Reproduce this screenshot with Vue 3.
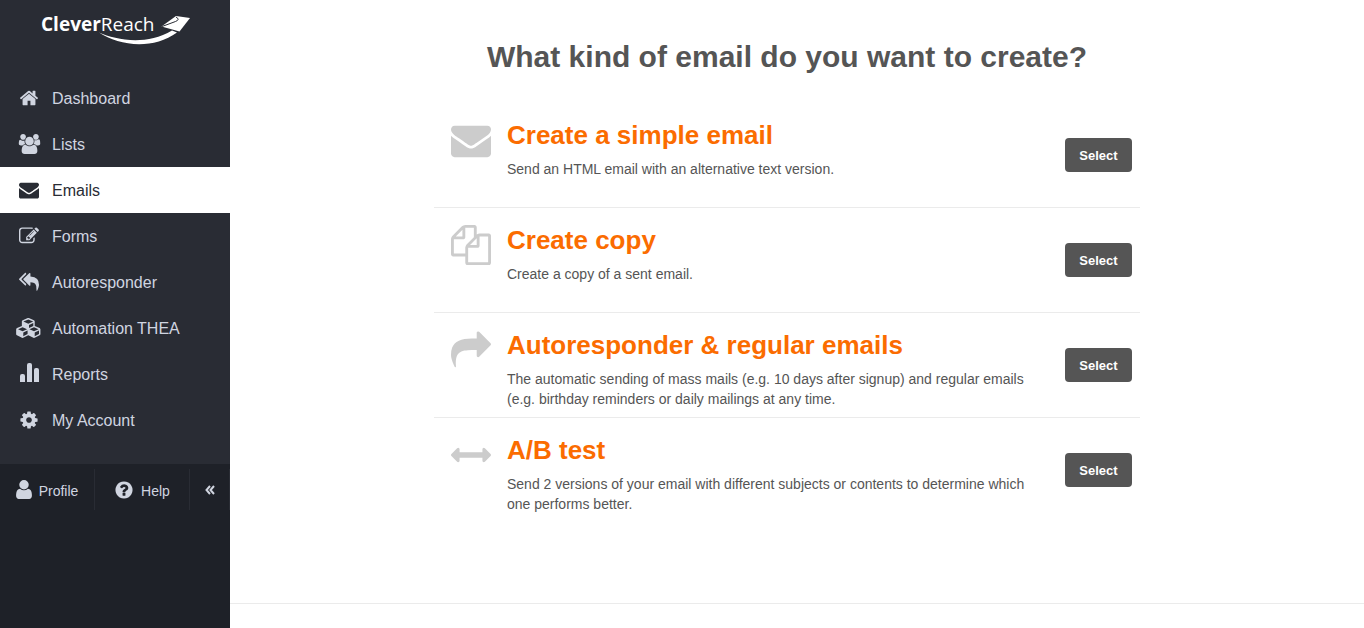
<template>
  <div class="app">
    <aside class="sidebar">
      <div class="sidebar-top">
        <a href="#" class="logo" aria-label="CleverReach">
          <svg width="160" height="42" viewBox="0 -8 160 42">
            <text x="0" y="19" class="logo-text"><tspan class="logo-bold">Clever</tspan>Reach</text>
            <path d="M58 20.500C75 28 105 34 131 18.500L136 20.500C112 38 78 34 58 20.500Z" />
            <path d="M135 4L149 6L138.500 19.500L120.500 14.500Z" />
            <path d="M121 14.500L134.500 9.500Q139.500 7.500 135 5" class="logo-fold" />
          </svg>
        </a>

        <nav class="nav">
          <a
            v-for="item in navItems"
            :key="item.label"
            href="#"
            class="nav-item"
            :class="{ active: item.label === current }"
            @click.prevent="current = item.label"
          >
            <span class="nav-icon">
              <svg :width="item.width" :height="item.height" :viewBox="item.box">
                <path :d="item.path" />
              </svg>
            </span>
            <span class="nav-label">{{ item.label }}</span>
          </a>
        </nav>
      </div>

      <div class="sidebar-bottom">
        <a href="#" class="bottom-item profile">
          <svg width="16" height="19" viewBox="256 128 1280 1536"><path :d="icons.user" /></svg>
          <span>Profile</span>
        </a>
        <a href="#" class="bottom-item help">
          <svg width="20" height="20" viewBox="0 0 1792 1792"><path :d="icons.question" /></svg>
          <span>Help</span>
        </a>
        <button type="button" class="bottom-item collapse" aria-label="Collapse">
          <svg width="10" height="10" viewBox="0 0 10 10">
            <path d="M5 1L1.500 5L5 9M9 1L5.500 5L9 9" class="chevrons" />
          </svg>
        </button>
      </div>
    </aside>

    <main class="main">
      <div class="page">
        <section class="content">
          <h1>What kind of email do you want to create?</h1>
          <ul class="options">
            <li v-for="option in options" :key="option.title" class="option">
              <svg class="option-icon" width="40" height="40" viewBox="0 0 1792 1792">
                <path :d="option.path" />
              </svg>
              <div class="option-text">
                <h2>{{ option.title }}</h2>
                <p>{{ option.text }}</p>
              </div>
              <button type="button" class="select-button">Select</button>
            </li>
          </ul>
        </section>
      </div>
      <footer class="footer"></footer>
    </main>
  </div>
</template>

<script setup>
import { ref } from "vue";

const current = ref("Emails");

const icons = {
  home: "M1472 992v480q0 26-19 45t-45 19h-384v-384h-256v384h-384q-26 0-45-19t-19-45v-480q0-1 .5-3t.5-3l575-474 575 474q1 2 1 6zm223-69l-62 74q-8 9-21 11h-3q-13 0-21-7l-692-577-692 577q-12 8-24 7-13-2-21-11l-62-74q-8-10-7-23.5t11-21.5l719-599q32-26 76-26t76 26l244 204v-195q0-14 9-23t23-9h192q14 0 23 9t9 23v408l219 182q10 8 11 21.5t-7 23.5z",
  users: "M657 896q-162 5-265 128h-134q-82 0-138-40.5t-56-118.5q0-353 124-353 6 0 43.5 21t97.5 42.5 119 21.5q67 0 133-23-5 37-5 66 0 159 81 293zm1071 637q0 120-73 189.5t-194 69.5h-874q-121 0-194-69.5t-73-189.5q0-53 3.5-103.5t14-109 26.5-108.5 43-97.5 62-81 85.5-53.5 111.5-20q10 0 43 21.5t73 48 107 48 135 21.5 135-21.5 107-48 73-48 43-21.5q61 0 111.5 20t85.5 53.5 62 81 43 97.5 26.5 108.5 14 109 3.5 103.5zm-1024-1277q0 106-75 181t-181 75-181-75-75-181 75-181 181-75 181 75 75 181zm704 384q0 159-112.5 271.5t-271.5 112.5-271.5-112.5-112.5-271.5 112.5-271.5 271.5-112.5 271.5 112.5 112.5 271.5zm576 225q0 78-56 118.5t-138 40.5h-134q-103-123-265-128 81-134 81-293 0-29-5-66 66 23 133 23 59 0 119-21.5t97.5-42.5 43.5-21q124 0 124 353zm-128-609q0 106-75 181t-181 75-181-75-75-181 75-181 181-75 181 75 75 181z",
  envelope: "M1792 710v794q0 66-47 113t-113 47h-1472q-66 0-113-47t-47-113v-794q44 49 101 87 362 246 497 345 57 42 92.5 65.5t94.5 48 110 24.5h2q51 0 110-24.5t94.5-48 92.5-65.5q170-123 498-345 57-39 100-87zm0-294q0 79-49 151t-122 123q-376 261-468 325-10 7-42.5 31t-54 38.5-52 32.5-57.5 27-50 9h-2q-23 0-50-9t-57.5-27-52-32.5-54-38.5-42.5-31q-91-64-262-182.5t-205-142.5q-62-42-117-115.5t-55-136.5q0-78 41.5-130t118.5-52h1472q65 0 112.5 47t47.5 113z",
  edit: "M888 1184l116-116-152-152-116 116v56h96v96h56zm440-720q-16-16-33 1l-350 350q-17 17-1 33t33-1l350-350q17-17 1-33zm80 594v190q0 119-84.5 203.5t-203.5 84.5h-832q-119 0-203.5-84.5t-84.5-203.5v-832q0-119 84.5-203.5t203.5-84.5h832q63 0 117 25 15 7 18 23 3 17-9 29l-49 49q-14 14-32 8-23-6-45-6h-832q-66 0-113 47t-47 113v832q0 66 47 113t113 47h832q66 0 113-47t47-113v-126q0-13 9-22l64-64q15-15 35-7t20 29zm-96-738l288 288-672 672h-288v-288zm444 132l-92 92-288-288 92-92q28-28 68-28t68 28l152 152q28 28 28 68t-28 68z",
  replyAll: "M640 1082v70q0 42-39 59-13 5-25 5-27 0-45-19l-512-512q-19-19-19-45t19-45l512-512q29-31 70-14 39 17 39 59v69l-397 398q-19 19-19 45t19 45zm1152 58q0 58-17 133.5t-38.5 138-48 125-40.5 90.5l-20 40q-8 17-28 17-6 0-9-1-25-8-23-34 43-400-106-565-64-71-170.5-110.5t-267.5-52.5v251q0 42-39 59-13 5-25 5-27 0-45-19l-512-512q-19-19-19-45t19-45l512-512q29-31 70-14 39 17 39 59v262q411 28 599 221 169 173 169 509z",
  cubes: "M640 1632l384-192v-314l-384 164v342zm-64-454l404-173-404-173-404 173zm1088 454l384-192v-314l-384 164v342zm-64-454l404-173-404-173-404 173zm-448-293l384-165v-266l-384 164v267zm-64-379l441-189-441-189-441 189zm1088 518v416q0 36-19 67t-52 47l-448 224q-25 14-57 14t-57-14l-448-224q-5-2-7-4-2 2-7 4l-448 224q-25 14-57 14t-57-14l-448-224q-33-16-52-47t-19-67v-416q0-38 21.5-70t56.5-48l434-186v-400q0-38 21.5-70t56.5-48l448-192q23-10 50-10t50 10l448 192q35 16 56.5 48t21.5 70v400l434 186q36 16 57 48t21 70z",
  bars: "M0 19v-6a2 2 0 0 1 2-2h1a2 2 0 0 1 2 2v6zM7 19V2a2 2 0 0 1 2-2h1a2 2 0 0 1 2 2v17zM14 19V7a2 2 0 0 1 2-2h1a2 2 0 0 1 2 2v12z",
  cog: "M1152 896q0-106-75-181t-181-75-181 75-75 181 75 181 181 75 181-75 75-181zm512-109v222q0 12-8 23t-20 13l-185 28q-19 54-39 91 35 50 107 138 10 12 10 25t-9 23q-27 37-99 108t-94 71q-12 0-26-9l-138-108q-44 23-91 38-16 136-29 186-7 28-36 28h-222q-14 0-24.5-8.5t-11.5-21.5l-28-184q-49-16-90-37l-141 107q-10 9-25 9-14 0-25-11-126-114-165-168-7-10-7-23 0-12 8-23 15-21 51-66.5t54-70.5q-27-50-41-99l-183-27q-13-2-21-12.5t-8-23.5v-222q0-12 8-23t19-13l186-28q14-46 39-92-40-57-107-138-10-12-10-24 0-10 9-23 26-36 98.5-107.5t94.5-71.5q13 0 26 10l138 107q44-23 91-38 16-136 29-186 7-28 36-28h222q14 0 24.5 8.5t11.5 21.5l28 184q49 16 90 37l142-107q9-9 24-9 13 0 25 10 129 119 165 170 7 8 7 22 0 12-8 23-15 21-51 66.5t-54 70.5q26 50 41 98l183 28q13 2 21 12.5t8 23.5z",
  user: "M1536 1399q0 109-62.5 187t-150.5 78h-854q-88 0-150.5-78t-62.5-187q0-85 8.5-160.5t31.5-152 58.5-131 94-89 134.5-34.5q131 128 313 128t313-128q76 0 134.5 34.5t94 89 58.5 131 31.5 152 8.5 160.5zm-256-887q0 159-112.5 271.5t-271.5 112.5-271.5-112.5-112.5-271.5 112.5-271.5 271.5-112.5 271.5 112.5 112.5 271.5z",
  question: "M1024 1376v-192q0-14-9-23t-23-9h-192q-14 0-23 9t-9 23v192q0 14 9 23t23 9h192q14 0 23-9t9-23zm256-672q0-88-55.5-163t-138.5-116-170-41q-243 0-371 213-15 24 8 42l132 100q7 6 19 6 16 0 25-12 53-68 86-92 34-24 86-24 48 0 85.5 26t37.5 59q0 38-20 61t-68 45q-63 28-115.5 86.5t-52.5 125.5v36q0 14 9 23t23 9h192q14 0 23-9t9-23q0-19 21.5-49.5t54.5-49.5q32-18 49-28.5t46-35 44.5-48 28-60.5 12.5-81zm384 192q0 209-103 385.5t-279.5 279.5-385.5 103-385.5-103-279.5-279.5-103-385.5 103-385.5 279.5-279.5 385.5-103 385.5 103 279.5 279.5 103 385.5z",
  copy: "M1696 384q40 0 68 28t28 68v1216q0 40-28 68t-68 28h-960q-40 0-68-28t-28-68v-288h-544q-40 0-68-28t-28-68v-672q0-40 20-88t48-76l408-408q28-28 76-48t88-20h416q40 0 68 28t28 68v328q68-40 128-40h416zm-544 213l-299 299h299v-299zm-640-384l-299 299h299v-299zm196 647l316-316v-416h-384v416q0 40-28 68t-68 28h-416v640h512v-256q0-40 20-88t48-76zm956 804v-1152h-384v416q0 40-28 68t-68 28h-416v640h896z",
  share: "M1792 640q0 26-19 45l-512 512q-19 19-45 19t-45-19-19-45v-256h-224q-98 0-175.5 6t-154 21.5-133 42.5-105.5 69.5-80 101-48.5 138.5-17.5 181q0 55 5 123 0 6 2.5 23.5t2.5 26.5q0 15-8.5 25t-23.5 10q-16 0-28-17-7-9-13-22t-13.5-30-10.5-24q-127-285-127-451 0-199 53-333 162-403 875-403h224v-256q0-26 19-45t45-19 45 19l512 512q19 19 19 45z",
  arrows: "M1792 896q0 26-19 45l-256 256q-19 19-45 19t-45-19-19-45v-128h-1024v128q0 26-19 45t-45 19-45-19l-256-256q-19-19-19-45t19-45l256-256q19-19 45-19t45 19 19 45v128h1024v-128q0-26 19-45t45-19 45 19l256 256q19 19 19 45z",
};

const square = "0 0 1792 1792";

const navItems = [
  { label: "Dashboard", path: icons.home, box: square, width: 20, height: 20 },
  { label: "Lists", path: icons.users, box: "0 0 2048 1792", width: 23, height: 20 },
  { label: "Emails", path: icons.envelope, box: square, width: 20, height: 20 },
  { label: "Forms", path: icons.edit, box: square, width: 20, height: 20 },
  { label: "Autoresponder", path: icons.replyAll, box: square, width: 20, height: 20 },
  { label: "Automation THEA", path: icons.cubes, box: "0 0 2304 1792", width: 26, height: 20 },
  { label: "Reports", path: icons.bars, box: "0 0 19 23", width: 19, height: 23 },
  { label: "My Account", path: icons.cog, box: square, width: 20, height: 20 },
];

const options = [
  {
    title: "Create a simple email",
    text: "Send an HTML email with an alternative text version.",
    path: icons.envelope,
  },
  {
    title: "Create copy",
    text: "Create a copy of a sent email.",
    path: icons.copy,
  },
  {
    title: "Autoresponder & regular emails",
    text: "The automatic sending of mass mails (e.g. 10 days after signup) and regular emails (e.g. birthday reminders or daily mailings at any time.",
    path: icons.share,
  },
  {
    title: "A/B test",
    text: "Send 2 versions of your email with different subjects or contents to determine which one performs better.",
    path: icons.arrows,
  },
];
</script>

<style>
body {
  margin: 0;
  background: #fff;
}
</style>

<style scoped>
.app {
  display: flex;
  min-height: 100vh;
  font-family: "Helvetica Neue", "Liberation Sans", Arial, sans-serif;
  color: #555;
}

a {
  color: inherit;
  text-decoration: none;
}

svg {
  display: block;
  flex: none;
  fill: currentColor;
}

/* sidebar */
.sidebar {
  flex: none;
  width: 230px;
  background: #1e2128;
  color: #d0d5e0;
}

.sidebar-top {
  padding-bottom: 21px;
  background: #292c34;
}

.logo {
  display: block;
  height: 71px;
  padding: 4px 0 0 41px;
  color: #fff;
}

.logo-text {
  font-family: "Open Sans", "Noto Sans", sans-serif;
  font-size: 19px;
}

.logo-bold {
  font-weight: 700;
}

.logo-fold {
  fill: none;
  stroke: #292c34;
  stroke-width: 1;
}

.nav-item {
  display: flex;
  align-items: center;
  height: 46px;
  font-size: 16px;
}

.nav-item.active {
  background: #fff;
  color: #292c34;
}

.nav-icon {
  display: flex;
  justify-content: center;
  width: 26px;
  margin: 0 10px 0 16px;
}

.nav-label {
  padding-top: 2px;
}

.sidebar-bottom {
  display: flex;
  padding-top: 5px;
}

.bottom-item {
  box-sizing: border-box;
  display: flex;
  align-items: center;
  justify-content: center;
  gap: 7px;
  height: 41px;
  padding: 0;
  border: 0;
  border-right: 1px solid #292c34;
  background: none;
  color: inherit;
  font-size: 14px;
}

.bottom-item span {
  padding-top: 2px;
}

.profile,
.help {
  width: 95px;
}

.collapse {
  flex: 1;
  cursor: pointer;
}

.chevrons {
  fill: none;
  stroke: currentColor;
  stroke-width: 2;
}

/* content */
.main {
  display: flex;
  flex: 1;
  flex-direction: column;
}

.page {
  padding: 39px 20px 0 0;
}

.content {
  max-width: 706px;
  margin: 0 auto;
}

h1 {
  margin: 0 0 28px;
  font-size: 30px;
  line-height: 36px;
  text-align: center;
}

.options {
  margin: 0;
  padding: 0;
  list-style: none;
}

.option {
  box-sizing: border-box;
  display: flex;
  align-items: flex-start;
  min-height: 105px;
  padding: 16px 8px 8px 17px;
  border-bottom: 1px solid #ebebeb;
}

.option:last-child {
  border-bottom: 0;
}

.option-icon {
  margin-top: 1px;
  color: #ccc;
}

.option-text {
  flex: 1;
  padding: 0 24px 0 16px;
}

h2 {
  margin: 0 0 8px;
  font-size: 26px;
  line-height: 32px;
  color: #fb6c00;
}

p {
  margin: 0;
  font-size: 14px;
  line-height: 20px;
}

.select-button {
  width: 67px;
  height: 34px;
  margin-top: 19px;
  padding: 0;
  border: 0;
  border-radius: 4px;
  background: #555;
  color: #fff;
  font-family: inherit;
  font-size: 13px;
  font-weight: 700;
  cursor: pointer;
}

.footer {
  height: 24px;
  margin-top: auto;
  border-top: 1px solid #ebebeb;
}
</style>
